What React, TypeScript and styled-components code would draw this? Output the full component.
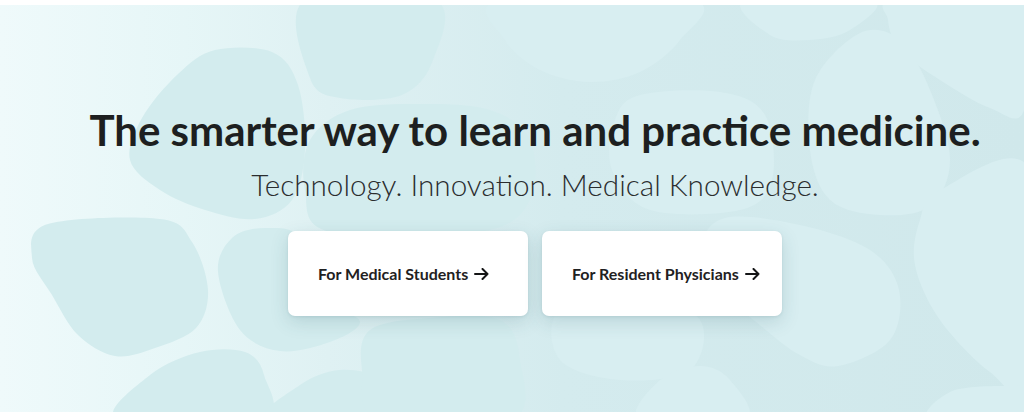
import * as React from 'react'
import styled, { createGlobalStyle } from 'styled-components'

type Point = [number, number]

interface IBlob {
  tone: 'deep' | 'pale'
  points: Point[]
}

interface ILink {
  label: string
}

const GlobalStyle = createGlobalStyle`
  html, body {
    margin: 0;
    padding: 0;
    background: #ffffff;
  }
  body {
    font-family: Lato, "Liberation Sans", sans-serif;
    -webkit-font-smoothing: antialiased;
  }
`

// soft shapes scattered across the hero background
const blobs: IBlob[] = [
  { tone: 'deep', points: [[305, 0], [435, 0], [433, 60], [402, 95], [340, 98], [310, 78]] },
  {
    tone: 'deep',
    points: [[215, 50], [272, 52], [298, 85], [305, 150], [292, 200], [255, 219], [205, 210], [160, 190], [130, 160], [142, 118], [178, 74]]
  },
  { tone: 'deep', points: [[310, 140], [350, 110], [420, 104], [490, 110], [530, 140], [530, 200], [480, 232], [330, 232], [305, 190]] },
  {
    tone: 'deep',
    points: [[48, 224], [160, 219], [192, 242], [208, 290], [196, 328], [155, 348], [115, 356], [78, 335], [52, 295], [32, 258]]
  },
  { tone: 'deep', points: [[265, 228], [302, 238], [330, 300], [360, 322], [330, 342], [280, 351], [240, 330], [218, 272], [232, 238]] },
  { tone: 'deep', points: [[118, 420], [150, 375], [200, 352], [245, 352], [264, 375], [262, 420]] },
  { tone: 'deep', points: [[268, 420], [300, 385], [340, 370], [380, 380], [395, 420]] },
  { tone: 'deep', points: [[370, 330], [430, 318], [500, 320], [520, 360], [512, 420], [380, 420], [362, 370]] },
  { tone: 'pale', points: [[500, 0], [692, 0], [680, 40], [640, 72], [590, 82], [540, 70], [505, 40]] },
  { tone: 'pale', points: [[745, 0], [872, 0], [850, 30], [810, 40], [770, 35]] },
  { tone: 'pale', points: [[895, 0], [1024, 0], [1024, 110], [990, 108], [940, 80], [900, 50], [888, 20]] },
  { tone: 'pale', points: [[860, 33], [900, 40], [930, 90], [950, 160], [930, 206], [880, 215], [830, 200], [810, 150], [815, 80]] },
  { tone: 'pale', points: [[640, 95], [720, 92], [765, 115], [772, 180], [740, 210], [650, 210], [612, 170], [615, 120]] },
  {
    tone: 'pale',
    points: [[725, 218], [800, 225], [870, 250], [899, 290], [890, 340], [838, 366], [800, 355], [760, 325], [720, 290], [700, 250]]
  },
  { tone: 'pale', points: [[940, 190], [1030, 170], [1030, 385], [990, 372], [940, 320], [915, 265], [920, 220]] },
  { tone: 'pale', points: [[560, 310], [640, 300], [700, 320], [690, 370], [620, 380], [560, 360]] },
  { tone: 'pale', points: [[640, 420], [660, 380], [700, 366], [730, 380], [745, 420]] },
  { tone: 'pale', points: [[930, 420], [950, 392], [1000, 386], [1030, 390], [1030, 420]] }
]

const links: ILink[] = [
  { label: 'For Medical Students' },
  { label: 'For Resident Physicians' }
]

function blobPath(pts: Point[]) {
  const n = pts.length
  let d = `M${pts[0][0]},${pts[0][1]}`
  for (let i = 0; i < n; i++) {
    const p0 = pts[(i - 1 + n) % n]
    const p1 = pts[i]
    const p2 = pts[(i + 1) % n]
    const p3 = pts[(i + 2) % n]
    const c1x = p1[0] + (p2[0] - p0[0]) / 6
    const c1y = p1[1] + (p2[1] - p0[1]) / 6
    const c2x = p2[0] - (p3[0] - p1[0]) / 6
    const c2y = p2[1] - (p3[1] - p1[1]) / 6
    d += ` C${c1x.toFixed(1)},${c1y.toFixed(1)} ${c2x.toFixed(1)},${c2y.toFixed(1)} ${p2[0]},${p2[1]}`
  }
  return d + 'Z'
}

const Hero = styled.section`
  position: relative;
  margin-top: 5px;
  height: 407px;
  overflow: hidden;
  box-sizing: border-box;
  padding: 100px 0 0 46px;
  display: flex;
  flex-direction: column;
  align-items: center;
  background: linear-gradient(
    90deg,
    #effafb 0%,
    #e6f6f7 18%,
    #dff1f3 32%,
    #d4ebee 55%,
    #d0e8eb 100%
  );
`

const Backdrop = styled.svg`
  position: absolute;
  inset: 0;
  width: 100%;
  height: 100%;
  z-index: 0;
`

const Content = styled.div`
  position: relative;
  z-index: 1;
  display: flex;
  flex-direction: column;
  align-items: center;
`

const Title = styled.h1`
  margin: 0;
  font-size: 42px;
  line-height: 50px;
  font-weight: 700;
  color: #1d1f20;
  white-space: nowrap;
`

const Tagline = styled.p`
  margin: 12px 0 0;
  font-size: 29.7px;
  line-height: 36px;
  font-weight: 300;
  color: #2a2d2e;
  white-space: nowrap;
`

const Actions = styled.div`
  display: flex;
  gap: 14px;
  margin-top: 28px;
`

const ActionCard = styled.a`
  width: 240px;
  height: 85px;
  box-sizing: border-box;
  padding-left: 30px;
  display: flex;
  align-items: center;
  gap: 6px;
  background: #ffffff;
  border-radius: 7px;
  box-shadow: 0 6px 18px rgba(40, 90, 100, 0.17), 0 1px 3px rgba(40, 90, 100, 0.1);
  font-size: 16px;
  font-weight: 700;
  color: #1f2122;
  text-decoration: none;
  cursor: pointer;
`

const Arrow = styled.svg`
  width: 15px;
  height: 12px;
  flex-shrink: 0;
`

function ArrowIcon() {
  return (
    <Arrow viewBox="0 0 15 12" fill="none" stroke="#141516" strokeWidth={2} strokeLinecap="round" strokeLinejoin="round">
      <path d="M1 6h12.5M8.5 1l5 5-5 5" />
    </Arrow>
  )
}

export default function App() {
  return (
    <>
      <GlobalStyle />
      <Hero>
        <Backdrop viewBox="0 5 1024 407" preserveAspectRatio="none" aria-hidden="true">
          {blobs.map((blob, index) => (
            <path
              key={index}
              d={blobPath(blob.points)}
              fill={blob.tone === 'deep' ? '#d3ecee' : '#d8eef1'}
            />
          ))}
        </Backdrop>
        <Content>
          <Title>The smarter way to learn and practice medicine.</Title>
          <Tagline>Technology. Innovation. Medical Knowledge.</Tagline>
          <Actions>
            {links.map(link => (
              <ActionCard key={link.label}>
                {link.label}
                <ArrowIcon />
              </ActionCard>
            ))}
          </Actions>
        </Content>
      </Hero>
    </>
  )
}
